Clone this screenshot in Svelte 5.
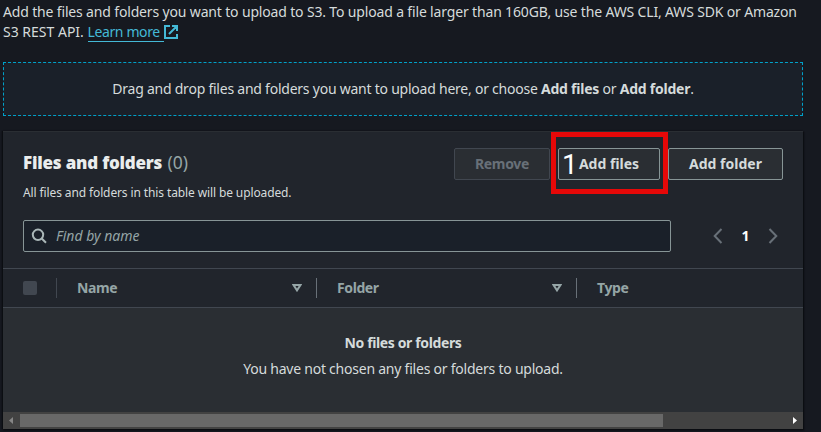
<script>
  const columns = [
    { label: 'Name', sortable: true },
    { label: 'Folder', sortable: true },
    { label: 'Type', sortable: false }
  ];
</script>

<main>
  <p class="intro">
    <span class="l1">Add the files and folders you want to upload to S3. To upload a file larger than 160GB, use the AWS CLI, AWS SDK or Amazon</span><br />
    <span class="l2">S3 REST API.</span>
    <a href="#learn"><span class="more">Learn more</span></a><svg class="ext" width="14" height="14" viewBox="0 0 14 14" fill="none" stroke="currentColor" stroke-width="2"><path d="M6 1H1v12h12V9M8 1h5v5M13 1L5 9" /></svg>
  </p>

  <div class="drop"><span>Drag and drop files and folders you want to upload here, or choose <b>Add files</b> or <b>Add folder</b>.</span></div>

  <section>
    <header>
      <div class="title">
        <h2><b>Files and folders</b> <span>(0)</span></h2>
        <p>All files and folders in this table will be uploaded.</p>
      </div>
      <div class="actions">
        <button class="remove" disabled>Remove</button>
        <div class="step">
          <button class="add-files">Add files</button>
          <div class="callout"></div>
          <span class="number">1</span>
        </div>
        <button class="add-folder">Add folder</button>
      </div>
    </header>

    <div class="tools">
      <div class="search">
        <svg width="16" height="16" viewBox="0 0 16 16" fill="none" stroke="currentColor" stroke-width="2"><circle cx="7" cy="6.8" r="5.2" /><path d="M10.7 10.5L15 14.8" /></svg>
        <span>Find by name</span>
      </div>
      <nav>
        <svg width="10" height="16" viewBox="0 0 10 16" fill="none" stroke="currentColor" stroke-width="2"><path d="M8.5 1L1.7 8l6.8 7" /></svg>
        <b>1</b>
        <svg width="10" height="16" viewBox="0 0 10 16" fill="none" stroke="currentColor" stroke-width="2"><path d="M1.5 1l6.8 7-6.8 7" /></svg>
      </nav>
    </div>

    <div class="thead">
      <div class="check"><i></i></div>
      {#each columns as column}
        <div class="col">
          <span>{column.label}</span>
          {#if column.sortable}
            <svg width="10" height="8" viewBox="0 0 10 8" fill="none" stroke="currentColor" stroke-width="2"><path d="M1.5 1h7L5 6.4z" /></svg>
          {/if}
        </div>
      {/each}
    </div>

    <div class="empty">
      <b>No files or folders</b>
      <p>You have not chosen any files or folders to upload.</p>
    </div>

    <div class="scroll">
      <svg width="17" height="17" viewBox="0 0 17 17"><path d="M6 8.5L10 5v7z" fill="#868686" /></svg>
      <div class="thumb"></div>
      <svg class="right" width="17" height="17" viewBox="0 0 17 17"><path d="M11 8.5L7 5v7z" fill="#fff" /></svg>
    </div>
  </section>
</main>

<style>
  :global(body) { background: #161920; }
  * { box-sizing: border-box; }
  main {
    width: 821px; height: 432px; padding: 2px 18px 0 3px; overflow: hidden;
    background: #161920; color: #d5dbdb;
    font: 14px/20px "Noto Sans", "Open Sans", sans-serif;
    white-space: nowrap;
  }
  p, h2 { margin: 0; }
  .intro { height: 40px; }
  .l1 { letter-spacing: -0.158px; }
  a { color: #44b9d6; text-decoration: none; border-bottom: 1px solid #44b9d6; padding-right: 4px; letter-spacing: -0.38px; }
  .ext { color: #44b9d6; vertical-align: -2px; }
  .drop {
    margin-top: 20px; height: 54px; border: 1px dashed #00a1c9; background: #1a2029;
    display: flex; align-items: center; justify-content: center; letter-spacing: -0.235px;
  }
  section {
    margin-top: 15px; width: 800px; height: 298px; background: #21252c;
    border-top: 1px solid #2a2e33; display: flex; flex-direction: column;
    box-shadow: 0 1px 2px #0b0d11, -1px 0 1px #0d1014, 1px 1px 1px #0d1014;
  }
  header { display: flex; justify-content: space-between; padding: 16px 20px 0; height: 88px; }
  h2 { font-size: 17px; line-height: 28px; color: #eaeded; letter-spacing: -0.21px; }
  h2 span { color: #95a5a6; font-weight: 400; font-size: 17.5px; margin-left: 1px; letter-spacing: 0; }
  .title p { font-size: 12px; line-height: 20px; margin-top: 6px; letter-spacing: -0.115px; }
  .actions { display: flex; gap: 8px; height: 32px; }
  button {
    height: 32px; padding: 0; border: 1px solid #879596; border-radius: 2px;
    background: #2a2e33; color: #d5dbdb; font: 700 14px/20px "Noto Sans", sans-serif;
  }
  .remove { width: 96px; color: #687078; border-color: #414750; letter-spacing: -0.3px; }
  .add-files { width: 102px; }
  .add-folder { width: 115px; }
  .step { position: relative; }
  .callout { position: absolute; left: -7px; top: -16px; width: 117px; height: 62px; border: 5px solid #e60808; }
  .number { position: absolute; left: 4px; top: 1px; font: 28px/32px Roboto, "Liberation Sans", sans-serif; color: #fff; }
  .tools { display: flex; justify-content: space-between; height: 48px; padding: 0 25px 0 20px; }
  .search {
    width: 648px; height: 32px; display: flex; align-items: center; gap: 9px; padding-left: 7px;
    border: 1px solid #879596; border-radius: 2px; background: #1a2029; color: #95a5a6; font-style: italic;
  }
  .search svg { color: #aab7b8; }
  nav { width: 65px; height: 32px; display: flex; align-items: center; justify-content: space-between; color: #687078; }
  nav b { color: #fff; }
  .thead { display: flex; height: 40px; border: 1px solid #414750; border-width: 1px 0; color: #95a5a6; }
  .check { flex: none; width: 54px; height: 20px; margin-top: 9px; padding: 3px 0 0 20px; border-right: 1px solid #414750; }
  .check i { display: block; width: 14px; height: 14px; border-radius: 2px; background: #414750; }
  .col { flex: none; width: 260px; height: 20px; margin-top: 9px; padding: 0 14px 0 20px; display: flex; align-items: center; justify-content: space-between; font-weight: 700; border-right: 1px solid #687078; letter-spacing: -0.4px; }
  .col:last-child { flex: 1; border: 0; }
  .empty { height: 104px; background: #2a2e33; text-align: center; padding-top: 25px; }
  .empty b { display: block; letter-spacing: -0.38px; }
  .empty p { margin-top: 6px; letter-spacing: -0.23px; }
  .scroll { display: flex; align-items: center; height: 17px; background: #424242; }
  .thumb { width: 643px; height: 13px; background: #686868; }
  .right { margin-left: auto; }
</style>
